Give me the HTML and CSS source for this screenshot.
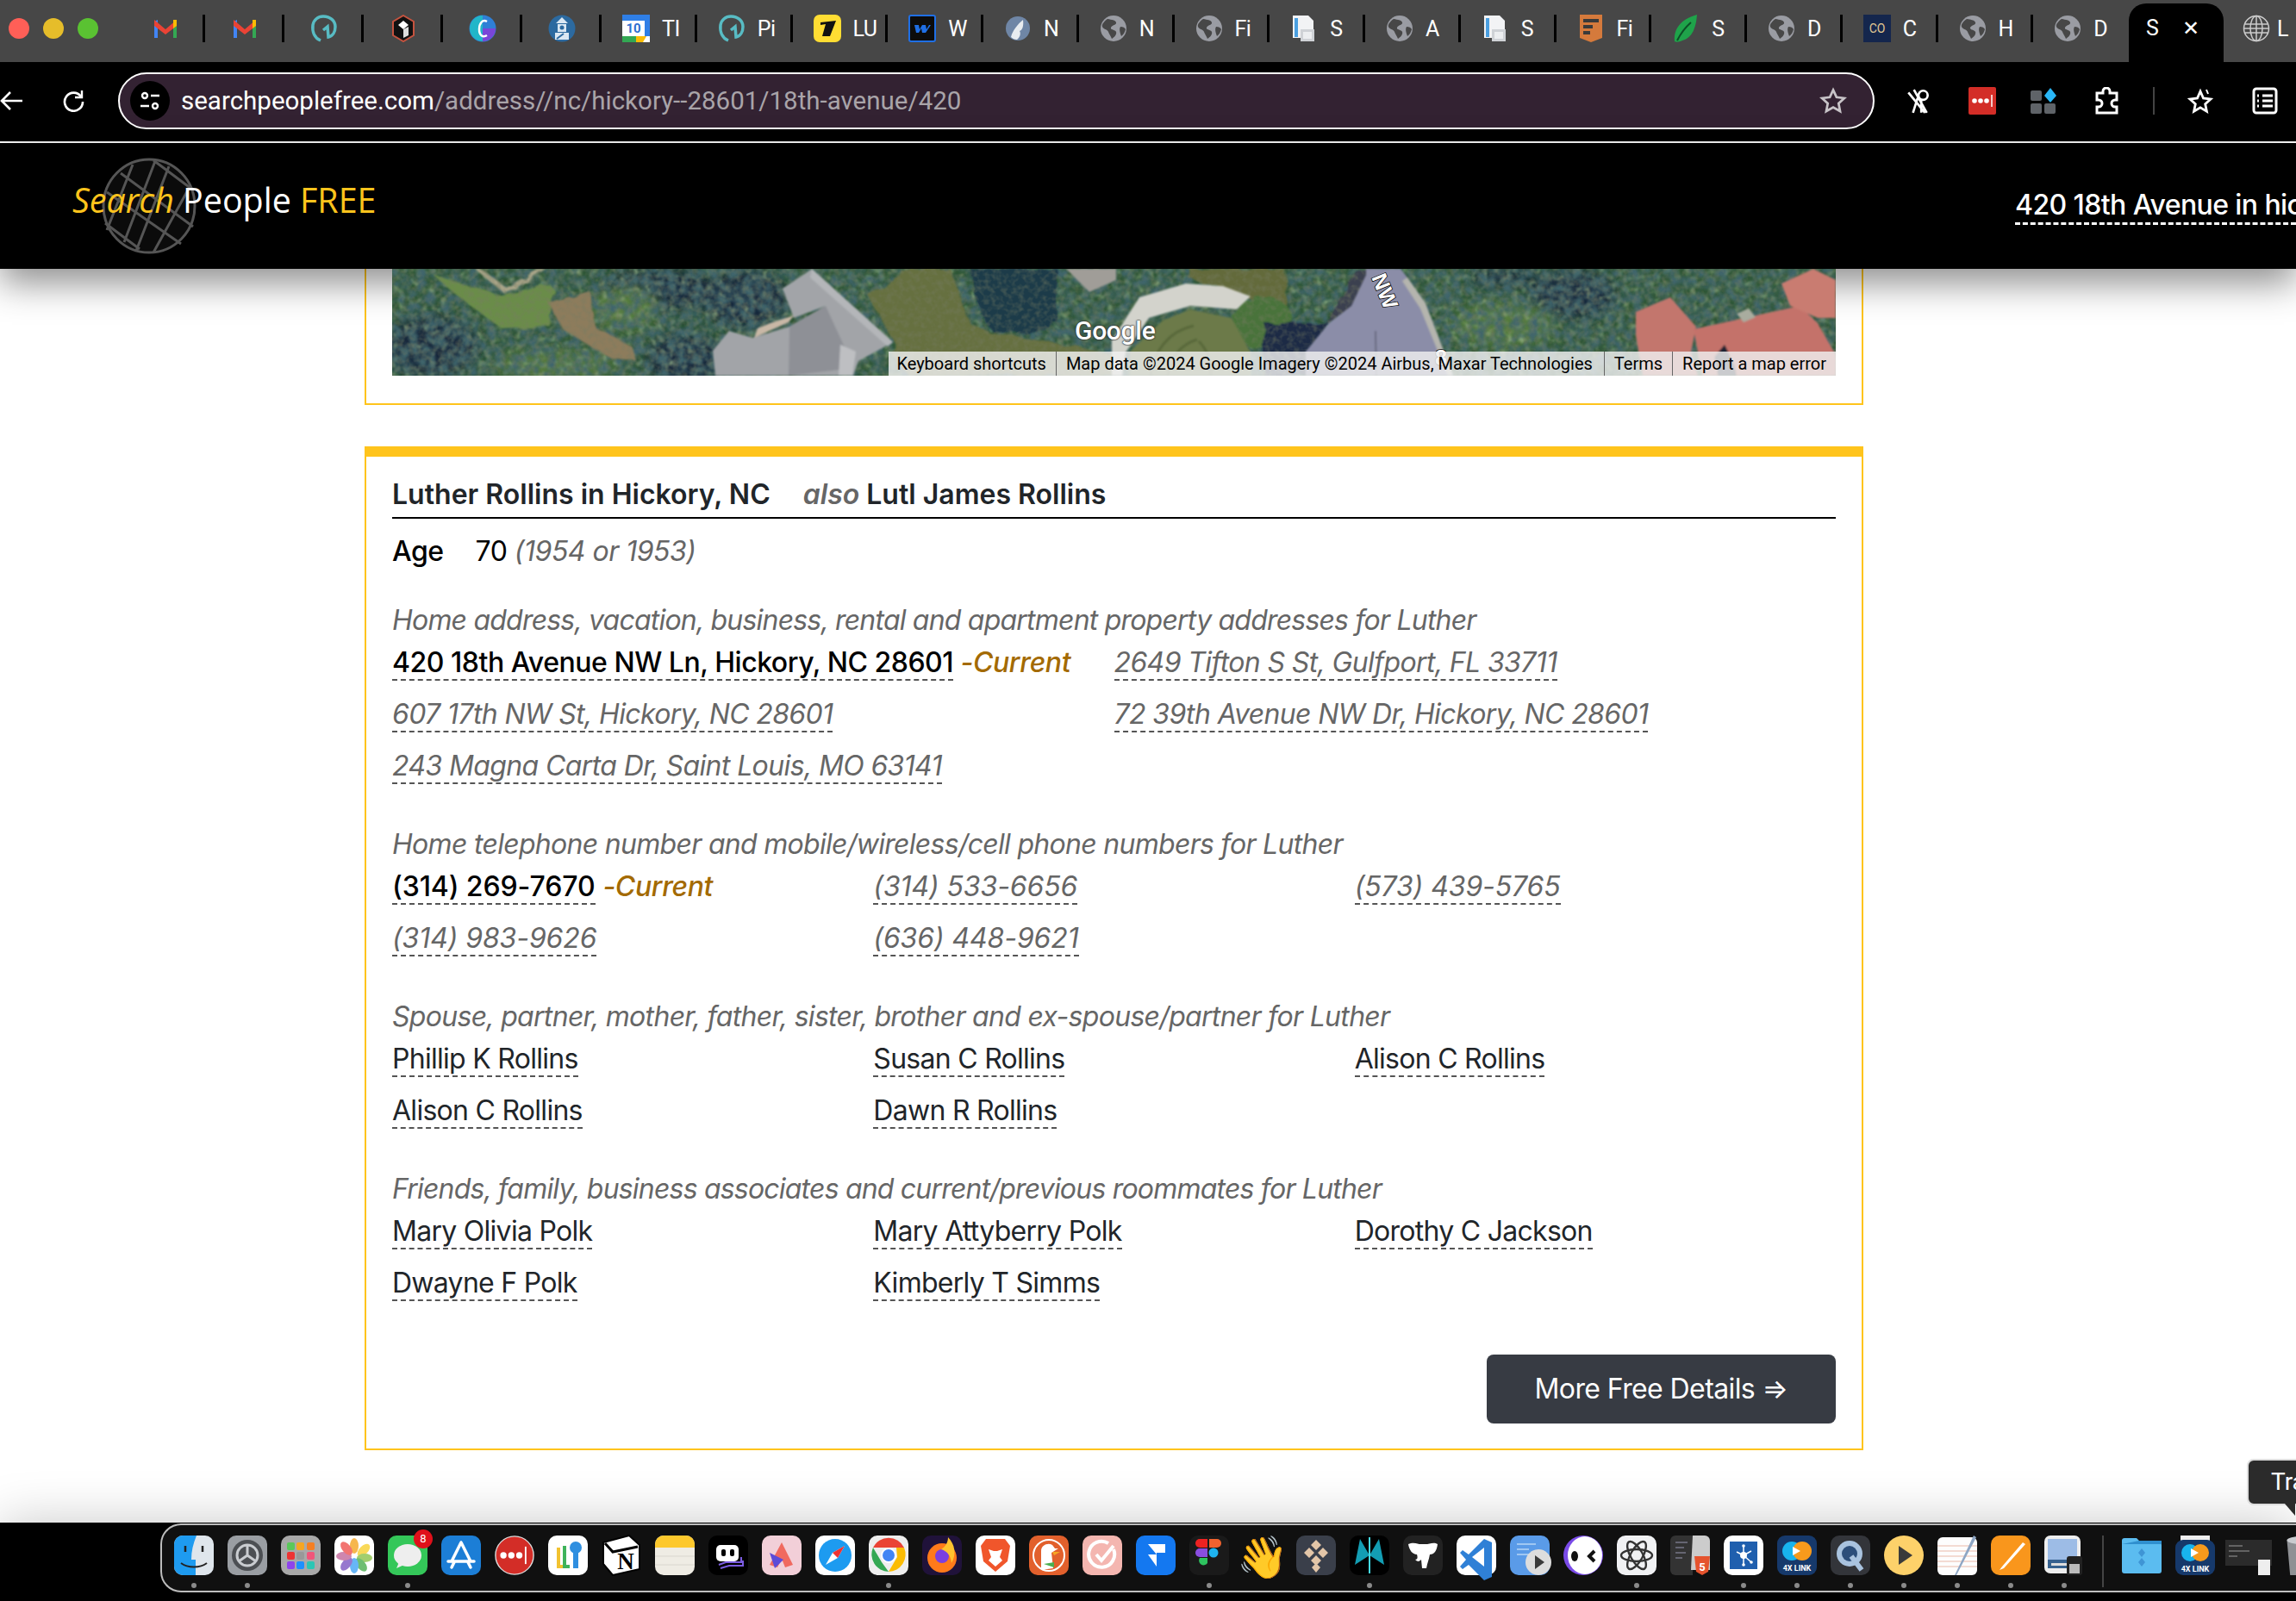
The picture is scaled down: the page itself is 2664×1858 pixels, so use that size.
FILE: index.html
```html
<!DOCTYPE html>
<html lang="en">
<head>
    <meta charset="UTF-8">
    <meta name="viewport" content="width=device-width, initial-scale=1.0">
    <title>420 18th Avenue in hickory</title>
    <link rel="stylesheet" href="styles.css">
</head>
<body>
<svg class="defs" width="0" height="0">
    <symbol id="globe" viewBox="0 0 32 32">
        <circle cx="16" cy="16" r="15" fill="#9a9ca3"/>
        <path d="M9 5c5 1 9 1 10 4s-5 3-6 6 5 2 6 5-2 6-5 8c-1-3-3-5-4-8s-6-3-7-6 3-7 6-9z" fill="#474747"/>
        <path d="M24 14c3 0 5 1 6 3-1 3-2 6-5 8-1-3-3-8-1-11z" fill="#474747"/>
    </symbol>
    <symbol id="doc" viewBox="0 0 32 32">
        <path d="M3 1h18l6 6v20H3z" fill="#f2f3f5"/>
        <path d="M5 4h4v22H5z" fill="#4a9fe0"/>
        <path d="M12 17h16v14H12z" fill="#cfd2d6"/>
        <path d="M15 20h10v8H15z" fill="#eceef0"/>
    </symbol>
    <symbol id="swirl" viewBox="0 0 32 32">
        <path d="M12 30C5 27 2 20 3 12 4 6 9 2 15 2c8 0 14 5 14 12 0 6-3 11-8 12l-1-12-5 4" fill="none" stroke="#58bcc4" stroke-width="3.500"/>
    </symbol>
    <symbol id="gmail" viewBox="0 0 32 32">
        <path d="M3 27V8l4-2v21z" fill="#4285f4"/>
        <path d="M25 27V6l4 2v19z" fill="#34a853"/>
        <path d="M3 6l13 11L29 6v7L16 23 3 13z" fill="#ea4335"/>
        <path d="M25 6h4v7l-4 3z" fill="#fbbc04"/>
    </symbol>
</svg>

<div class="tabstrip">
    <div class="lights"><i class="light red"></i><i class="light yellow"></i><i class="light green"></i></div>
    <div class="tab pin"><svg class="favicon"><use href="#gmail"/></svg></div>
    <div class="tab pin"><svg class="favicon"><use href="#gmail"/></svg></div>
    <div class="tab pin"><svg class="favicon"><use href="#swirl"/></svg></div>
    <div class="tab pin">
        <svg class="favicon" viewBox="0 0 32 32"><path d="M16 1l12 7v16l-12 7-12-7V8z" fill="#111" stroke="#c5533f" stroke-width="2"/><path d="M16 7l6 5-6 5-6-5z" fill="#fff"/><path d="M16 17l6-3v10l-6 3z" fill="#ddd"/></svg>
    </div>
    <div class="tab pin">
        <svg class="favicon" viewBox="0 0 32 32"><circle cx="16" cy="16" r="15.500" fill="#2f7fd6"/><path d="M1 16a15 15 0 0 1 15-15v30A15 15 0 0 1 1 16z" fill="#21b6c9"/><path d="M16 31a15 15 0 0 0 15-15H16z" fill="#7a46d8"/><path d="M21 8c-5-3-9 2-9 9s4 10 9 7" fill="none" stroke="#fff" stroke-width="2.500"/></svg>
    </div>
    <div class="tab pin">
        <svg class="favicon" viewBox="0 0 32 32"><circle cx="16" cy="16" r="15.500" fill="#2c6aa0"/><path d="M16 3l7 7H9zM11 11h10v9H11zM8 21h16v8H8z" fill="#dbe8f3"/><circle cx="16" cy="15" r="2.500" fill="#2c6aa0"/><path d="M10 28l8-6" stroke="#2c6aa0" stroke-width="2"/></svg>
    </div>
    <div class="tab">
        <svg class="favicon" viewBox="0 0 32 32"><path d="M0 0h32v32H0z" fill="#fff"/><path d="M0 0h32v7H0z" fill="#2f7fe6"/><path d="M0 25h16v7H0z" fill="#33a853"/><path d="M16 25h12l-4 7h-8z" fill="#fbbc04"/><path d="M26 0h6v25h-6z" fill="#2f7fe6"/><text x="13" y="21" class="fav-text" fill="#2f6fd0">10</text></svg>
        <span class="tab-title">TI</span>
    </div>
    <div class="tab"><svg class="favicon"><use href="#swirl"/></svg><span class="tab-title">Pi</span></div>
    <div class="tab">
        <svg class="favicon" viewBox="0 0 32 32"><rect width="32" height="32" rx="7" fill="#ffdd33"/><path d="M8 9l18-2-7 18h-3l4-13-4 13h-3l4-13-4 13h-3l4-14-6 1z" fill="#111"/></svg>
        <span class="tab-title">LU</span>
    </div>
    <div class="tab">
        <svg class="favicon" viewBox="0 0 32 32"><rect x="1" y="1" width="30" height="30" rx="2" fill="#0c0c0c" stroke="#1f6fe5" stroke-width="2"/><path d="M7 12h5l1 5 3-5h4l1 5 3-5h2l-6 9h-4l-1-5-3 5h-3z" fill="#1f6fe5"/></svg>
        <span class="tab-title">W</span>
    </div>
    <div class="tab">
        <svg class="favicon" viewBox="0 0 32 32"><circle cx="16" cy="16" r="14" fill="#6f86a6"/><path d="M8 26c2-8 8-15 14-20 1 8-1 12-4 13 2 3 0 8-3 10-3 0-5-1-7-3z" fill="#e8ecf0"/></svg>
        <span class="tab-title">N</span>
    </div>
    <div class="tab"><svg class="favicon"><use href="#globe"/></svg><span class="tab-title">N</span></div>
    <div class="tab"><svg class="favicon"><use href="#globe"/></svg><span class="tab-title">Fi</span></div>
    <div class="tab"><svg class="favicon"><use href="#doc"/></svg><span class="tab-title">S</span></div>
    <div class="tab"><svg class="favicon"><use href="#globe"/></svg><span class="tab-title">A</span></div>
    <div class="tab"><svg class="favicon"><use href="#doc"/></svg><span class="tab-title">S</span></div>
    <div class="tab">
        <svg class="favicon" viewBox="0 0 32 32"><path d="M3 0h26v27l-13 5-13-5z" fill="#d57a3c"/><path d="M7 5h18v4H7zM7 12h11v4H7zM7 19h8v4H7z" fill="#3a3a3a"/></svg>
        <span class="tab-title">Fi</span>
    </div>
    <div class="tab">
        <svg class="favicon" viewBox="0 0 32 32"><path d="M29 0C28 14 24 27 12 30 8 32 4 32 3 31 2 18 8 6 29 0z" fill="#1fa34a"/><path d="M6 30C10 22 14 16 22 9" stroke="#0c4f26" stroke-width="2" fill="none"/></svg>
        <span class="tab-title">S</span>
    </div>
    <div class="tab"><svg class="favicon"><use href="#globe"/></svg><span class="tab-title">D</span></div>
    <div class="tab">
        <svg class="favicon" viewBox="0 0 32 32"><rect width="32" height="32" fill="#14264d"/><text x="16" y="21" class="fav-text co" fill="#e3c994">CO</text></svg>
        <span class="tab-title">C</span>
    </div>
    <div class="tab"><svg class="favicon"><use href="#globe"/></svg><span class="tab-title">H</span></div>
    <div class="tab last"><svg class="favicon"><use href="#globe"/></svg><span class="tab-title">D</span></div>
    <div class="tab-active"><span class="active-title">S</span><span class="tab-close">✕</span></div>
    <div class="tab-next">
        <svg class="favicon" viewBox="0 0 32 32" fill="none" stroke="#ccc" stroke-width="1.500"><circle cx="16" cy="16" r="14.500"/><ellipse cx="16" cy="16" rx="7" ry="14.500"/><path d="M2 11h28M2 21h28M16 1v30M1 16h30"/></svg>
        <span class="tab-title">L</span>
    </div>
</div>

<div class="toolbar">
    <svg class="tool back" viewBox="0 0 26 26" fill="none" stroke="#fff" stroke-width="2.600"><path d="M26 13H2M12 3L2 13l10 10"/></svg>
    <svg class="tool reload" viewBox="0 0 26 26" fill="none" stroke="#fff" stroke-width="2.600"><path d="M22 8a10.500 10.500 0 1 0 2 6"/><path d="M23 1v8h-8" stroke-width="2.400"/></svg>
    <div class="omnibox">
        <span class="site-chip">
            <svg viewBox="0 0 26 26" fill="none" stroke="#fff" stroke-width="2.400"><circle cx="7" cy="7" r="3"/><path d="M14 7h10M2 19h10"/><circle cx="19" cy="19" r="3"/></svg>
        </span>
        <span class="url"><span class="url-host">searchpeoplefree.com</span>/address//nc/hickory--28601/18th-avenue/420</span>
        <svg class="omni-star" viewBox="0 0 28 28" fill="none" stroke="#c8c4c8" stroke-width="2.400"><path d="M14 3l3.400 7.300 7.900 1-5.800 5.400 1.500 7.800L14 20.600 7 24.500l1.500-7.800L2.700 11.300l7.900-1z"/></svg>
    </div>
    <svg class="ext ext-key" viewBox="0 0 30 30" fill="none" stroke="#fff" stroke-width="2.500"><circle cx="20" cy="9" r="5"/><path d="M18 14v14M14 12l-5 16M10 3l14 25M4 6l18 22"/></svg>
    <svg class="ext ext-lastpass" viewBox="0 0 32 32"><rect width="32" height="32" rx="2" fill="#d32d27"/><circle cx="7" cy="16" r="2.800" fill="#fff"/><circle cx="14" cy="16" r="2.800" fill="#fff"/><circle cx="21" cy="16" r="2.800" fill="#fff"/><path d="M27 9v14" stroke="#fff" stroke-width="1.500"/></svg>
    <svg class="ext ext-blocks" viewBox="0 0 32 32"><rect x="1" y="4" width="13" height="12" rx="2" fill="#5f6368"/><rect x="1" y="19" width="13" height="12" rx="2" fill="#5f6368"/><rect x="17" y="19" width="13" height="12" rx="2" fill="#5f6368"/><path d="M24 1l7 9-7 8-7-8z" fill="#29b6f6"/></svg>
    <svg class="ext ext-puzzle" viewBox="0 0 32 32" fill="none" stroke="#fff" stroke-width="3"><path d="M4 7h7V5a4 4 0 0 1 8 0v2h8v8h-2a4 4 0 0 0 0 8h2v7H4v-7h2a4 4 0 0 0 0-8H4z"/></svg>
    <i class="tool-sep"></i>
    <svg class="ext ext-fav" viewBox="0 0 32 32" fill="none" stroke="#fff" stroke-width="2.800"><path d="M15 5l3.500 8 8.500 1-6.300 5.800 1.700 8.400-7.400-4.300-7.400 4.300 1.700-8.400L3 14l8.500-1z"/><path d="M22 3l2 5" stroke-width="2"/></svg>
    <svg class="ext ext-list" viewBox="0 0 30 32" fill="none" stroke="#fff" stroke-width="3"><rect x="2" y="2" width="26" height="28" rx="3"/><path d="M12 10h12M12 16h12M12 22h12M6 10h2M6 16h2M6 22h2"/></svg>
</div>

<header class="site-header">
    <div class="logo">
        <svg class="logo-globe" viewBox="0 0 110 112" fill="#0b0b0b" stroke="#555" stroke-width="3">
            <ellipse cx="55" cy="56" rx="53" ry="54"/>
            <path d="M22 18L106 80M6 40L92 100M4 76L44 106M60 3L104 36M36 8L6 84M62 4L26 98M78 10L40 108M102 34L60 110" fill="none"/>
        </svg>
        <span class="logo-text"><em>Search</em> <span class="logo-people">People</span> FREE</span>
    </div>
    <a class="header-title">420 18th Avenue in hickory</a>
</header>

<main class="page">
    <section class="card map-card">
        <div class="map">
            <svg class="map-img" viewBox="0 0 1675 124" preserveAspectRatio="none">
                <defs>
                    <filter id="leaves" x="0" y="0" width="100%" height="100%">
                        <feTurbulence type="fractalNoise" baseFrequency="0.1" numOctaves="2" seed="4"/>
                        <feColorMatrix values="0 0 0 0 0.05  0 0 0 0 0.13  0 0 0 0 0.15  2.400 0 0 0 -0.780"/>
                        <feGaussianBlur stdDeviation="0.800"/>
                    </filter>
                    <filter id="glints" x="0" y="0" width="100%" height="100%">
                        <feTurbulence type="fractalNoise" baseFrequency="0.14" numOctaves="2" seed="11"/>
                        <feColorMatrix values="0 0 0 0 0.36  0 0 0 0 0.52  0 0 0 0 0.28  0 2 0 0 -0.950"/>
                        <feGaussianBlur stdDeviation="0.800"/>
                    </filter>
                    <filter id="specks" x="0" y="0" width="100%" height="100%">
                        <feTurbulence type="fractalNoise" baseFrequency="0.15" numOctaves="2" seed="7"/>
                        <feColorMatrix values="0 0 0 0 0.18  0 0 0 0 0.20  0 0 0 0 0.12  1 0 0 0 -0.400"/>
                        <feGaussianBlur stdDeviation="0.600"/>
                    </filter>
                    <filter id="rough" x="-5%" y="-20%" width="110%" height="140%">
                        <feTurbulence type="fractalNoise" baseFrequency="0.06" numOctaves="2" seed="3" result="n"/>
                        <feDisplacementMap in="SourceGraphic" in2="n" scale="10"/>
                        <feGaussianBlur stdDeviation="0.800"/>
                    </filter>
                    <filter id="soft"><feGaussianBlur stdDeviation="8"/></filter>
                    <filter id="soft-sm"><feGaussianBlur stdDeviation="0.800"/></filter>
                </defs>
                <!-- trees -->
                <rect width="1675" height="124" fill="#2f5636"/>
                <g filter="url(#soft)" fill="#14253a">
                    <ellipse cx="45" cy="90" rx="55" ry="36"/>
                    <ellipse cx="310" cy="25" rx="70" ry="24"/>
                    <ellipse cx="340" cy="105" rx="45" ry="30"/>
                    <ellipse cx="410" cy="35" rx="50" ry="34"/>
                    <ellipse cx="1370" cy="30" rx="50" ry="28"/>
                    <ellipse cx="1290" cy="10" rx="40" ry="10"/>
                </g>
                <g filter="url(#soft)" fill="#557a3e">
                    <ellipse cx="270" cy="45" rx="40" ry="26"/>
                    <ellipse cx="1290" cy="65" rx="60" ry="26"/>
                    <ellipse cx="190" cy="112" rx="70" ry="18"/>
                </g>
                <rect width="1675" height="124" filter="url(#glints)"/>
                <rect width="1675" height="124" filter="url(#leaves)"/>
                <!-- lawns and bare ground -->
                <g filter="url(#rough)">
                    <path d="M48 7L130 32l52-15 5 6-5 44-54 3-58-43z" fill="#6a8c4a"/>
                    <path d="M96 0l36 30 46-30h-8l-38 22L104 0z" fill="#a9a488"/>
                    <path d="M182 40l48-13 5 40 43 23 6 17-32-4-54-33z" fill="#8d7c5c"/>
                    <path d="M552 30L600 0h48l22 63 21 10 59 10 43 7 47 10v24H600l-22-27 6-10z" fill="#66703f"/>
                    <path d="M926 0h109l5 50-50-18-64-20z" fill="#636b3b"/>
                    <path d="M672 0h100v60c-20 14-50 16-76 12-14-20-22-40-24-72z" fill="#1c3a4a"/>
                    <ellipse cx="1010" cy="62" rx="36" ry="30" fill="#4a733a"/>
                    <path d="M1012 63h75l-27 61h-48z" fill="#1d2a44"/>
                    <path d="M1120 0h20l-30 55-28 8z" fill="#3a4150"/>
                </g>
                <rect width="1675" height="124" filter="url(#specks)"/>
                <!-- house -->
                <g filter="url(#soft-sm)">
                    <path d="M487 0l94 85-40 22-6 17H375l-3-29 19-23 27 8 43-13 42-24-37 14-13-34z" fill="#a2a4a8"/>
                    <path d="M503 43l33 72-76 9 1-57z" fill="#8e9096"/>
                    <path d="M487 0l94 85-6 5-90-80z" fill="#b4b6b9"/>
                    <path d="M420 80l40-18 6-8-30 10-12 5z" fill="#c9b8a6"/>
                    <path d="M520 88l18 8-4 28h-16z" fill="#bebfc2"/>
                    <path d="M782 0h58v13l-31 14z" fill="#a09d98"/>
                    <!-- drive and lawn inside it -->
                    <path d="M835 124V83l32-50 54-16 43 3 32 12-16 15-54-4-48 14-27 40-4 27z" fill="#d3d3cc"/>
                    <path d="M856 124V96l38-36 32-13 48 10 22 40v27z" fill="#6c7a48"/>
                    <path d="M880 124c4-30 22-52 50-58M900 124c4-22 14-36 34-42M950 124c0-16-4-30-14-40" fill="none" stroke="#58683a" stroke-width="3"/>
                    <!-- road -->
                    <path d="M1060 124V96l27-33 26-20 17-36 0-7h40l8 10 21 30 32 84z" fill="#8b8da8"/>
                    <path d="M1178 10l21 30 32 84h-6l-32-78-21-32z" fill="#b5b5ae"/>
                    <path d="M1141 72l1 52" stroke="#5c5d70" stroke-width="1.500"/>
                    <!-- red roofs -->
                    <path d="M1443 50l40-17 30 34-6 30 8 27h-64l-8-47z" fill="#c3766d"/>
                    <path d="M1510 70l123-27 21 20 21 37v24h-155z" fill="#c4726a"/>
                    <path d="M1612 17l37-17 26 13v44h-21l-32-14z" fill="#c97c71"/>
                    <path d="M1538 124l-4-22 12-14 12 24 2 12z" fill="#1b2430"/>
                    <path d="M1560 52l14-6 8 10-14 6z" fill="#a9ac9f"/>
                </g>
                <text x="1136" y="26" class="map-road" transform="rotate(68 1148 18)">NW</text>
                <text x="1210" y="112" class="map-road">8</text>
            </svg>
            <span class="map-logo">Google</span>
            <div class="map-attrib">
                <span>Keyboard shortcuts</span>
                <span>Map data ©2024 Google Imagery ©2024 Airbus, Maxar Technologies</span>
                <span>Terms</span>
                <span>Report a map error</span>
            </div>
        </div>
    </section>

    <section class="card person-card">
        <h2 class="person-name">Luther Rollins in Hickory, NC <span class="also"><em>also</em> Lutl James Rollins</span></h2>
        <p class="age"><strong>Age</strong><span class="age-val">70</span> <em>(1954 or 1953)</em></p>

        <p class="label">Home address, vacation, business, rental and apartment property addresses for Luther</p>
        <ul class="grid two">
            <li><a class="main">420 18th Avenue NW Ln, Hickory, NC 28601</a> <b class="current">-Current</b></li>
            <li><a class="old">2649 Tifton S St, Gulfport, FL 33711</a></li>
            <li><a class="old">607 17th NW St, Hickory, NC 28601</a></li>
            <li><a class="old">72 39th Avenue NW Dr, Hickory, NC 28601</a></li>
            <li><a class="old">243 Magna Carta Dr, Saint Louis, MO 63141</a></li>
        </ul>

        <p class="label loose">Home telephone number and mobile/wireless/cell phone numbers for Luther</p>
        <ul class="grid three phones">
            <li><a class="main">(314) 269-7670</a> <b class="current">-Current</b></li>
            <li><a class="old">(314) 533-6656</a></li>
            <li><a class="old">(573) 439-5765</a></li>
            <li><a class="old">(314) 983-9626</a></li>
            <li><a class="old">(636) 448-9621</a></li>
        </ul>

        <p class="label loose">Spouse, partner, mother, father, sister, brother and ex-spouse/partner for Luther</p>
        <ul class="grid three names">
            <li><a>Phillip K Rollins</a></li>
            <li><a>Susan C Rollins</a></li>
            <li><a>Alison C Rollins</a></li>
            <li><a>Alison C Rollins</a></li>
            <li><a>Dawn R Rollins</a></li>
        </ul>

        <p class="label">Friends, family, business associates and current/previous roommates for Luther</p>
        <ul class="grid three names">
            <li><a>Mary Olivia Polk</a></li>
            <li><a>Mary Attyberry Polk</a></li>
            <li><a>Dorothy C Jackson</a></li>
            <li><a>Dwayne F Polk</a></li>
            <li><a>Kimberly T Simms</a></li>
        </ul>

        <div class="actions"><a class="btn">More Free Details ⇒</a></div>
    </section>
</main>

<div class="tooltip">Trash</div>

<footer class="dock-wrap">
    <div class="dock">
        <div class="app on"><svg viewBox="0 0 46 46"><rect width="46" height="46" rx="10" fill="#dfe6ec"/><path d="M10 0h16c-4 10-6 18-6 28h5v18H10A10 10 0 0 1 0 36V10A10 10 0 0 1 10 0z" fill="#1e9bf0"/><path d="M8 32c8 6 22 6 30 0" fill="none" stroke="#222" stroke-width="2"/><path d="M13 12v7M33 12v7" stroke="#222" stroke-width="2.500"/></svg></div>
        <div class="app on"><svg viewBox="0 0 46 46"><rect width="46" height="46" rx="10" fill="#9a9ea3"/><circle cx="23" cy="23" r="18" fill="#4c4f53"/><circle cx="23" cy="23" r="12" fill="none" stroke="#c9ccd0" stroke-width="3"/><path d="M23 23V11M23 23L13 30M23 23l10 7" stroke="#c9ccd0" stroke-width="3"/></svg></div>
        <div class="app"><svg viewBox="0 0 46 46"><rect width="46" height="46" rx="10" fill="#a9a9a9"/><rect x="7" y="8" width="9" height="9" rx="2" fill="#5ac85a"/><rect x="18" y="8" width="9" height="9" rx="2" fill="#f5a623"/><rect x="30" y="8" width="9" height="9" rx="2" fill="#f57f23"/><rect x="7" y="19" width="9" height="9" rx="2" fill="#e33"/><rect x="18" y="19" width="9" height="9" rx="2" fill="#999"/><rect x="30" y="19" width="9" height="9" rx="2" fill="#f0567a"/><rect x="7" y="30" width="9" height="9" rx="2" fill="#8e44ec"/><rect x="18" y="30" width="9" height="9" rx="2" fill="#1e90ff"/><rect x="30" y="30" width="9" height="9" rx="2" fill="#2cc6b4"/></svg></div>
        <div class="app"><svg viewBox="0 0 46 46"><rect width="46" height="46" rx="10" fill="#fff"/><g opacity=".8"><ellipse cx="23" cy="12" rx="5" ry="9" fill="#f5a623"/><ellipse cx="34" cy="17" rx="5" ry="9" fill="#f8d030" transform="rotate(45 34 17)"/><ellipse cx="35" cy="26" rx="9" ry="5" fill="#8bc34a"/><ellipse cx="31" cy="34" rx="5" ry="9" fill="#4caf50" transform="rotate(-40 31 34)"/><ellipse cx="23" cy="35" rx="5" ry="9" fill="#42a5f5"/><ellipse cx="14" cy="33" rx="5" ry="9" fill="#7e57c2" transform="rotate(40 14 33)"/><ellipse cx="11" cy="24" rx="9" ry="5" fill="#c2689a"/><ellipse cx="14" cy="15" rx="5" ry="9" fill="#ef5350" transform="rotate(-40 14 15)"/></g></svg></div>
        <div class="app on"><svg viewBox="0 0 46 46"><rect width="46" height="46" rx="10" fill="#34c759"/><ellipse cx="23" cy="23" rx="16" ry="13" fill="#eee"/><path d="M13 31l-3 7 9-4z" fill="#eee"/></svg><span class="badge">8</span></div>
        <div class="app"><svg viewBox="0 0 46 46"><rect width="46" height="46" rx="10" fill="#1c7ed6"/><path d="M23 8L12 30M23 8l11 22M8 30h30M12 37l3-6M34 37l-3-6" stroke="#fff" stroke-width="3.500" fill="none" stroke-linecap="round"/></svg></div>
        <div class="app"><svg viewBox="0 0 50 50"><circle cx="25" cy="25" r="24" fill="#d32d27" stroke="#ddd" stroke-width="1.500"/><circle cx="11" cy="25" r="4" fill="#fff"/><circle cx="21" cy="25" r="4" fill="#fff"/><circle cx="31" cy="25" r="4" fill="#fff"/><path d="M39 14v22" stroke="#fff" stroke-width="2"/></svg></div>
        <div class="app"><svg viewBox="0 0 46 46"><rect width="46" height="46" rx="10" fill="#fff"/><path d="M12 14v22h6" fill="none" stroke="#f2c230" stroke-width="4"/><path d="M19 12v24h6" fill="none" stroke="#3fb35a" stroke-width="4"/><circle cx="32" cy="14" r="7" fill="#2f8fe0"/><path d="M32 20v18" stroke="#2f8fe0" stroke-width="6"/></svg></div>
        <div class="app"><svg viewBox="0 0 46 46"><path d="M2 8L32 0l12 11v28L13 46 2 33z" fill="#fff" stroke="#000" stroke-width="2"/><path d="M4 9l9 10 29-6" fill="none" stroke="#000" stroke-width="3"/><text x="28" y="39" class="dock-n">N</text></svg></div>
        <div class="app"><svg viewBox="0 0 46 46"><rect width="46" height="46" rx="10" fill="#efece4"/><path d="M10 0h26a10 10 0 0 1 10 10v4H0v-4A10 10 0 0 1 10 0z" fill="#fdc82c"/><path d="M0 24h46M0 34h46" stroke="#d9d6ce"/></svg></div>
        <div class="app"><svg viewBox="0 0 46 46"><rect width="46" height="46" rx="10" fill="#000"/><rect x="9" y="11" width="26" height="19" rx="5" fill="#fff"/><rect x="15" y="16" width="5" height="8" rx="2" fill="#000"/><rect x="25" y="16" width="5" height="8" rx="2" fill="#000"/><path d="M12 34l8-3h18v-6M14 38l10-3h16v-6" fill="none" stroke="#7a5be0" stroke-width="2"/></svg></div>
        <div class="app"><svg viewBox="0 0 46 46"><rect width="46" height="46" rx="10" fill="#f2cfd8"/><path d="M23 8l13 26-9 3-4-10-5 10-9-3z" fill="#f0695f"/><path d="M9 20l16 8-10 10z" fill="#5d4bd8"/></svg></div>
        <div class="app"><svg viewBox="0 0 46 46"><rect width="46" height="46" rx="10" fill="#fff"/><circle cx="23" cy="23" r="19" fill="#1d9bf0"/><path d="M34 12L20 20l-8 14 14-8z" fill="#fff"/><path d="M34 12L20 20l6 6z" fill="#e33"/></svg></div>
        <div class="app on"><svg viewBox="0 0 46 46"><rect width="46" height="46" rx="10" fill="#eee"/><path d="M5 14a20 20 0 0 1 36 0H23z" fill="#ea4335"/><path d="M5 14l10 17 8 11a20 20 0 0 1-18-28z" fill="#34a853"/><path d="M41 14a20 20 0 0 1-18 28l10-17-1-11z" fill="#fbbc04"/><circle cx="23" cy="23" r="9" fill="#fff"/><circle cx="23" cy="23" r="7" fill="#4285f4"/></svg></div>
        <div class="app"><svg viewBox="0 0 46 46"><rect width="46" height="46" rx="10" fill="#20123a"/><circle cx="23" cy="26" r="17" fill="#ff7a1a"/><circle cx="23" cy="24" r="8" fill="#7a3fe0"/><path d="M30 2c8 8 10 20 4 30-1-10-6-14-12-16 5-3 8-8 8-14z" fill="#ffc32e"/></svg></div>
        <div class="app"><svg viewBox="0 0 46 46"><rect width="46" height="46" rx="10" fill="#fff"/><path d="M12 4h22l6 8-3 18-14 12L9 30 6 12z" fill="#f0562b"/><path d="M15 16l6 2h4l6-2-3 9 3 4-8 7-8-7 3-4z" fill="#fff"/></svg></div>
        <div class="app"><svg viewBox="0 0 46 46"><rect width="46" height="46" rx="10" fill="#e2602c"/><circle cx="23" cy="23" r="18" fill="none" stroke="#fff" stroke-width="2"/><path d="M14 40V18c0-7 8-10 13-7l3 4h4l-8 5 2 18z" fill="#fff"/><path d="M27 19h9l-7 4z" fill="#f5a623"/><path d="M17 33l12 4v-6z" fill="#4caf50"/></svg></div>
        <div class="app"><svg viewBox="0 0 46 46"><rect width="46" height="46" rx="10" fill="#f4b6b0"/><path d="M36 16a15 15 0 1 1-6-7" fill="none" stroke="#fff" stroke-width="4"/><path d="M16 22l6 7 14-17" fill="none" stroke="#fff" stroke-width="4"/></svg></div>
        <div class="app"><svg viewBox="0 0 46 46"><rect width="46" height="46" rx="10" fill="#1478f0"/><path d="M14 10h20v10H24l10 0-10 0v16l-10-14h10z" fill="#fff"/></svg></div>
        <div class="app on"><svg viewBox="0 0 46 46"><rect width="46" height="46" rx="10" fill="#1a1a1a"/><path d="M12 4h9v10h-9a5 5 0 0 1 0-10z" fill="#e22"/><path d="M23 4h9a5 5 0 0 1 0 10h-9z" fill="#f0622e"/><path d="M12 15h9v10h-9a5 5 0 0 1 0-10z" fill="#8a4ee0"/><circle cx="28" cy="20" r="5.500" fill="#1eb4f0"/><path d="M12 26h9v6a5 5 0 1 1-9-6z" fill="#2ec35f"/></svg></div>
        <div class="app emoji">👋</div>
        <div class="app"><svg viewBox="0 0 46 46"><rect width="46" height="46" rx="10" fill="#3a3f4a"/><path d="M23 5l6 6-6 6-6-6zM15 14l6 6-6 6-6-6zM31 14l6 6-6 6-6-6zM23 23l6 6-6 6-6-6zM23 32l5 5-5 6-5-6z" fill="#e3c6a8"/></svg></div>
        <div class="app on"><svg viewBox="0 0 46 46"><rect width="46" height="46" rx="10" fill="#000"/><path d="M12 4l11 19L34 4l6 30-17-11L6 34z" fill="#139db3"/><path d="M23 2v42" stroke="#45dbe8" stroke-width="2"/></svg></div>
        <div class="app"><svg viewBox="0 0 46 46"><rect width="46" height="46" rx="10" fill="#222"/><path d="M6 10c6-3 12 0 14 0h6c4 0 10-3 14 0-1 8-4 12-9 12-1 6-3 10-4 16h-5l-1-10c-2 2-4 3-7 0 3 0 3-3 2-6-5 0-9-5-10-12z" fill="#fff"/></svg></div>
        <div class="app"><svg viewBox="0 0 46 46"><rect width="46" height="46" rx="10" fill="#fff"/><path d="M32 4L14 22l-7-5-3 3 7 8-7 8 3 3 7-5 18 18 9-4V8z" fill="#2f80d6"/><path d="M32 14v22L18 25z" fill="#fff"/></svg></div>
        <div class="app"><svg viewBox="0 0 46 46"><rect width="46" height="46" rx="10" fill="#5a9be8"/><path d="M8 10h22M8 16h14M8 22h18" stroke="#b6d6f5" stroke-width="1.500"/><circle cx="33" cy="31" r="15" fill="#ddd"/><path d="M29 23l11 8-11 8z" fill="#3a3a3a"/></svg></div>
        <div class="app"><svg viewBox="0 0 46 46"><circle cx="23" cy="23" r="23" fill="#7a4be8"/><ellipse cx="25" cy="23" rx="20" ry="22" fill="#fff"/><ellipse cx="13" cy="24" rx="4" ry="6" fill="#111"/><path d="M36 18l-6 6 6 6" fill="none" stroke="#111" stroke-width="4"/></svg></div>
        <div class="app on"><svg viewBox="0 0 46 46"><rect width="46" height="46" rx="10" fill="#f0f1f3"/><g fill="none" stroke="#333" stroke-width="2.400"><ellipse cx="23" cy="23" rx="18" ry="7"/><ellipse cx="23" cy="23" rx="18" ry="7" transform="rotate(60 23 23)"/><ellipse cx="23" cy="23" rx="18" ry="7" transform="rotate(120 23 23)"/></g></svg></div>
        <div class="app"><svg viewBox="0 0 46 46"><path d="M6 0h20v46H6a6 6 0 0 1-6-6V6a6 6 0 0 1 6-6z" fill="#333"/><path d="M26 0h14a6 6 0 0 1 6 6v34H24z" fill="#ccc"/><path d="M6 8h14M6 14h10M6 20h12M6 26h8" stroke="#778" stroke-width="1.500"/><path d="M28 24h18l-2 18-7 4-7-4z" fill="#e5532d"/><text x="37" y="41" class="dock-5">5</text></svg></div>
        <div class="app on"><svg viewBox="0 0 46 46"><rect width="46" height="46" rx="10" fill="#fff"/><rect x="7" y="7" width="32" height="32" fill="#1f5fae"/><circle cx="23" cy="23" r="4" fill="#fff"/><path d="M23 23V12M23 23l9-5M23 23l9 8M23 23v11M23 23l-8-4" stroke="#fff" stroke-width="1.500"/><circle cx="23" cy="12" r="1.800" fill="#fff"/><circle cx="32" cy="31" r="1.800" fill="#fff"/><circle cx="23" cy="34" r="1.800" fill="#fff"/></svg></div>
        <div class="app on"><svg viewBox="0 0 46 46"><rect width="46" height="46" rx="9" fill="#16396b"/><circle cx="17" cy="18" r="11" fill="#18b4ee"/><circle cx="29" cy="18" r="11" fill="#f79a1c"/><path d="M18 13l9 5-9 5z" fill="#fff"/><text x="23" y="41" class="dock-4x">4X LINK</text></svg></div>
        <div class="app on"><svg viewBox="0 0 46 46"><rect width="46" height="46" rx="10" fill="#33353a"/><circle cx="22" cy="21" r="15" fill="#a9c3df"/><circle cx="22" cy="21" r="9" fill="#2c4e7a"/><path d="M24 24l12 16" stroke="#a9c3df" stroke-width="6"/></svg></div>
        <div class="app on"><svg viewBox="0 0 46 46"><circle cx="23" cy="23" r="23" fill="#fdd16a"/><path d="M17 12l16 11-16 11z" fill="#3a3a3a"/></svg></div>
        <div class="app on"><svg viewBox="0 0 46 46"><rect y="2" width="46" height="44" rx="6" fill="#fdfdfd"/><path d="M0 12h46M0 18h46M0 24h46M0 30h46M0 36h46" stroke="#e9b9a8"/><path d="M42 0L20 46l2 0L45 2z" fill="#8ea6c4"/></svg></div>
        <div class="app on"><svg viewBox="0 0 46 46"><rect width="46" height="46" rx="10" fill="#f9961c"/><path d="M37 8L13 36l-3 4 5-2 25-28z" fill="#fff"/></svg></div>
        <div class="app on"><svg viewBox="0 0 46 46"><rect width="42" height="44" rx="7" fill="#eee"/><rect x="4" y="4" width="34" height="34" fill="#9dbce6"/><path d="M4 28h34v10H4z" fill="#36618f"/><path d="M8 32h18v3H8z" fill="#ddd"/><rect x="26" y="24" width="18" height="22" rx="3" fill="#222"/><rect x="29" y="33" width="12" height="11" fill="#bbb"/></svg></div>
        <i class="dock-sep"></i>
        <div class="app"><svg viewBox="0 0 46 46"><path d="M0 6a3 3 0 0 1 3-3h14l5 5h21a3 3 0 0 1 3 3v30a3 3 0 0 1-3 3H3a3 3 0 0 1-3-3z" fill="#5bbcf0"/><path d="M0 10h46V6H20z" fill="#2f8fcf"/><path d="M23 15l4 5-4 5-4-5zM23 26l4 5-4 5-4-5z" fill="#3f95d5"/></svg></div>
        <div class="app"><svg viewBox="0 0 46 46"><rect x="6" y="0" width="34" height="10" fill="#eee"/><rect y="5" width="46" height="41" rx="9" fill="#16396b"/><circle cx="17" cy="20" r="10" fill="#18b4ee"/><circle cx="29" cy="20" r="10" fill="#f79a1c"/><path d="M18 15l9 5-9 5z" fill="#fff"/><text x="23" y="42" class="dock-4x">4X LINK</text></svg></div>
        <div class="app"><svg viewBox="0 0 54 46" class="wide"><rect y="5" width="54" height="30" fill="#2b2b2b"/><path d="M4 12h16M4 18h24M4 24h10" stroke="#777" stroke-width="1.500"/><rect x="38" y="28" width="14" height="18" fill="#eee"/></svg></div>
        <div class="app"><svg viewBox="0 0 46 50"><path d="M4 6h38l-4 44H8z" fill="#8e9094"/><ellipse cx="23" cy="6" rx="19" ry="5" fill="#c9cbcf"/></svg></div>
    </div>
</footer>
</body>
</html>
```

FILE: styles.css
```css
* {
    box-sizing: border-box;
}
html, body {
    margin: 0;
    padding: 0;
    height: 1858px;
    overflow: hidden;
}
body {
    background-color: #fff;
    color: #212529;
    font-family: Inter, "Liberation Sans", sans-serif;
    display: flex;
    flex-direction: column;
}
.defs {
    position: absolute;
}

/* browser tabs */
.tabstrip {
    flex: 0 0 72px;
    background-color: #474747;
    display: flex;
    align-items: flex-start;
    font-family: Roboto, sans-serif;
    color: #fff;
}
.lights {
    flex: 0 0 146px;
    display: flex;
    gap: 16px;
    padding: 21px 0 0 10px;
}
.light {
    width: 24px;
    height: 24px;
    border-radius: 50%;
}
.red { background-color: #ff5f57; }
.yellow { background-color: #e6bd2a; }
.green { background-color: #5ac232; }
.tab {
    flex: 0 0 110.75px;
    height: 32px;
    margin-top: 17px;
    border-right: 3px solid #000;
    display: flex;
    align-items: center;
    padding-left: 24px;
    gap: 14px;
}
.tab.pin {
    flex-basis: 92px;
    padding-left: 30px;
}
.tab.last {
    border-right: 0;
}
.favicon {
    width: 32px;
    height: 32px;
    flex: none;
}
.fav-text {
    font: bold 15px Roboto, sans-serif;
    text-anchor: middle;
}
.fav-text.co {
    font-size: 14px;
    font-weight: 400;
}
.tab-title {
    font-size: 25px;
    white-space: nowrap;
    letter-spacing: -.5px;
}
.tab-active {
    flex: 0 0 110px;
    height: 68px;
    margin-top: 4px;
    background-color: #000;
    border-radius: 20px 20px 0 0;
    display: flex;
    align-items: flex-start;
    padding: 14px 0 0 20px;
    gap: 27px;
    font-size: 25px;
}
.tab-close {
    font-size: 24px;
    line-height: 30px;
}
.tab-next {
    display: flex;
    align-items: center;
    gap: 8px;
    height: 32px;
    margin-top: 17px;
    padding-left: 22px;
}

/* address bar */
.toolbar {
    flex: 0 0 94px;
    background-color: #000;
    border-bottom: 2px solid #fff;
    display: flex;
    align-items: center;
    padding-bottom: 2px;
}
.tool {
    flex: none;
    width: 26px;
    height: 26px;
}
.reload {
    margin-left: 46px;
}
.omnibox {
    flex: 0 0 2038px;
    height: 66px;
    margin-left: 39px;
    background-color: #332232;
    border: 2px solid #fff;
    border-radius: 33px;
    display: flex;
    align-items: center;
    padding: 0 30px 0 12px;
}
.site-chip {
    width: 46px;
    height: 46px;
    background-color: #000;
    border-radius: 50%;
    display: flex;
    align-items: center;
    justify-content: center;
}
.site-chip svg {
    width: 26px;
    height: 26px;
}
.url {
    flex: 1;
    margin-left: 13px;
    font: 29.500px Roboto, sans-serif;
    color: #a9a4a9;
    font-variant-ligatures: none;
}
.url-host {
    color: #fff;
}
.omni-star {
    width: 32px;
    height: 32px;
}
.ext {
    flex: none;
    width: 32px;
    height: 32px;
}
.ext-key { margin-left: 35px; }
.ext-lastpass { margin-left: 42px; }
.ext-blocks { margin-left: 39px; }
.ext-puzzle { margin-left: 42px; }
.tool-sep {
    width: 2px;
    height: 32px;
    margin-left: 37px;
    background-color: #444;
}
.ext-fav { margin-left: 38px; }
.ext-list {
    margin-left: 43px;
    width: 30px;
}

/* site header */
.site-header {
    flex: 0 0 146px;
    background-color: #000;
    color: #fff;
    position: relative;
    z-index: 2;
    box-shadow: 0 16px 40px rgba(0, 0, 0, .45);
    display: flex;
    align-items: center;
    justify-content: space-between;
    white-space: nowrap;
}
.logo {
    position: relative;
    margin-left: 84px;
    display: flex;
    align-items: center;
}
.logo-globe {
    position: absolute;
    left: 34px;
    top: -36px;
    width: 110px;
    height: 112px;
}
.logo-text {
    position: relative;
    font: 400 39.400px "Open Sans", sans-serif;
    color: #ffc41c;
    margin-top: -14px;
}
.logo-people {
    color: #fff;
}
.header-title {
    flex: none;
    width: 326px;
    overflow: hidden;
    font-size: 32px;
    font-weight: 500;
    letter-spacing: -.6px;
    line-height: 40px;
    border-bottom: 3px dashed #fff;
}

/* page body */
.page {
    flex: 1;
    min-height: 0;
    padding: 0 502px 0 423px;
    overflow: hidden;
}
.card {
    border: 2px solid #ffc41c;
    padding: 0 30px;
}
.map-card {
    border-top: 0;
    padding-bottom: 32px;
}
.map {
    position: relative;
    z-index: 3;
    height: 124px;
    overflow: hidden;
}
.map-img {
    display: block;
    width: 100%;
    height: 124px;
}
.map-road {
    font: bold 25px "Liberation Sans", sans-serif;
    fill: #fff;
    stroke: #000;
    stroke-width: 1.500px;
    paint-order: stroke;
}
.map-logo {
    position: absolute;
    left: 792px;
    top: 54px;
    font: 500 30px Roboto, sans-serif;
    letter-spacing: -.3px;
    color: #fff;
    text-shadow: 0 0 2px #333, 0 0 2px #333, 0 0 1px #333;
}
.map-attrib {
    position: absolute;
    right: 0;
    bottom: 0;
    height: 28px;
    display: flex;
    background-color: rgba(240, 240, 240, .82);
    font: 20px Roboto, sans-serif;
    color: #000;
    line-height: 29px;
}
.map-attrib span {
    padding: 0 11px;
    border-left: 1px solid #666;
    white-space: nowrap;
}
.map-attrib span:first-child {
    border-left: 0;
    padding: 0 11px 0 9px;
}
.map-attrib span:nth-child(2) {
    padding-right: 13px;
}
.person-card {
    margin-top: 48px;
    border-top-width: 12px;
    height: 1165px;
}
.person-name {
    margin: 0;
    padding-top: 24px;
    height: 72px;
    font-size: 32px;
    line-height: 40px;
    font-weight: 600;
    border-bottom: 2px solid #000;
    white-space: pre-wrap;
}
.also {
    margin-left: 30px;
}
.also em {
    color: #666;
    font-weight: 600;
}
.age {
    margin: 16px 0 0;
    font-size: 32px;
    line-height: 44px;
    letter-spacing: -.5px;
    color: #000;
}
.age strong {
    font-weight: 500;
}
.age-val {
    margin-left: 37px;
}
.age em {
    color: #666;
}
.label {
    margin: 36px 0 0;
    font-size: 32px;
    line-height: 44px;
    letter-spacing: -.8px;
    font-style: italic;
    color: #666;
}
.label.loose {
    letter-spacing: -.7px;
}
.grid {
    list-style: none;
    margin: 0;
    padding: 0;
    display: grid;
    font-size: 32px;
    letter-spacing: -.62px;
}
.grid.two {
    grid-template-columns: repeat(2, 1fr);
}
.grid.three {
    grid-template-columns: repeat(3, 1fr);
}
.grid.phones {
    letter-spacing: -.1px;
}
.grid.names {
    letter-spacing: -.72px;
}
.grid li {
    height: 60px;
    line-height: 44px;
    padding-top: 5px;
    white-space: nowrap;
}
.grid a {
    display: inline-block;
    line-height: 38px;
    border-bottom: 2px dashed #555;
    color: #212529;
}
.grid a.main {
    color: #000;
    font-weight: 500;
}
.grid.two a.main {
    letter-spacing: -.47px;
}
.grid a.old {
    color: #666;
    font-style: italic;
}
.current {
    color: #a36a00;
    font-style: italic;
    font-weight: 500;
    letter-spacing: -.4px;
}
.actions {
    display: flex;
    justify-content: flex-end;
    margin-top: 50px;
}
.btn {
    width: 405px;
    height: 80px;
    background-color: #373b43;
    color: #fff;
    border-radius: 8px;
    font-size: 32px;
    letter-spacing: -.6px;
    line-height: 80px;
    text-align: center;
}

/* dock */
.tooltip {
    position: absolute;
    left: 2607px;
    top: 1693px;
    width: 120px;
    height: 54px;
    padding-left: 26px;
    background-color: #2b2b2b;
    border: 2px solid #ddd;
    border-radius: 8px;
    color: #fff;
    font: 28px/50px Roboto, sans-serif;
    z-index: 3;
}
.tooltip::after {
    content: "";
    position: absolute;
    left: 42px;
    top: 50px;
    border-left: 12px solid transparent;
    border-top: 14px solid #2b2b2b;
}
.dock-wrap {
    flex: 0 0 91px;
    background-color: #000;
    position: relative;
    z-index: 2;
    box-shadow: 0 0 60px rgba(0, 0, 0, .22);
    padding: 1px 0 0 186px;
}
.dock {
    width: 2600px;
    height: 80px;
    background-color: #101010;
    border: 2px solid #bdbdbd;
    border-right: 0;
    border-radius: 24px 0 0 24px;
    padding: 12px 0 0 6px;
    display: flex;
    align-items: flex-start;
}
.app {
    flex: 0 0 62px;
    height: 66px;
    position: relative;
    display: flex;
    justify-content: center;
}
.app svg {
    width: 46px;
    height: 46px;
    overflow: visible;
}
.app .wide {
    width: 54px;
}
.app.on::after {
    content: "";
    position: absolute;
    left: 28px;
    top: 55px;
    width: 6px;
    height: 6px;
    border-radius: 50%;
    background-color: #8a8a8a;
}
.emoji {
    font-size: 48px;
    line-height: 50px;
}
.badge {
    position: absolute;
    right: 2px;
    top: -7px;
    width: 22px;
    height: 22px;
    border-radius: 50%;
    background-color: #e0101a;
    color: #fff;
    font: 13px/22px Roboto, sans-serif;
    text-align: center;
}
.dock-n {
    font: bold 27px "Liberation Serif", serif;
    text-anchor: middle;
}
.dock-5 {
    font: bold 13px Roboto, sans-serif;
    fill: #fff;
    text-anchor: middle;
}
.dock-4x {
    font: bold 9px Roboto, sans-serif;
    fill: #fff;
    text-anchor: middle;
}
.dock-sep {
    flex: 0 0 2px;
    height: 60px;
    margin: 0 13px;
    background-color: #444;
}
```
